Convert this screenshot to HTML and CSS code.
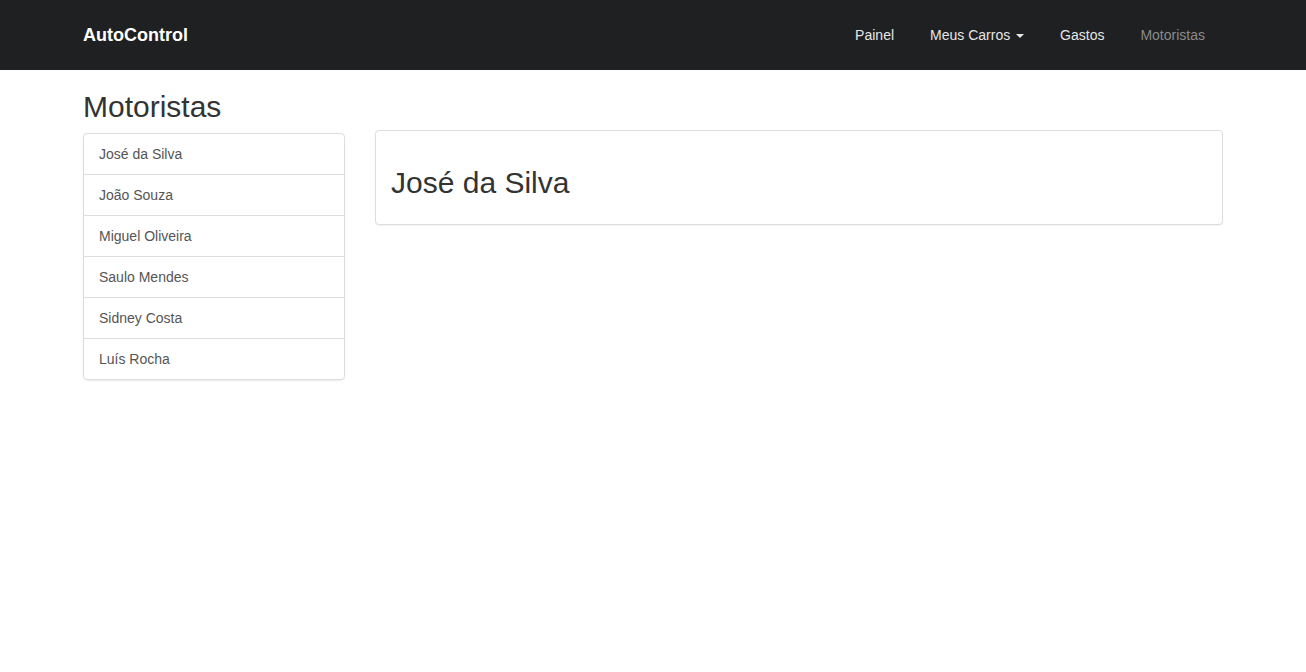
FILE: index.html
```html
<!DOCTYPE html>
<html lang="pt">
<head>
<meta charset="utf-8">
<title>AutoControl</title>
<link rel="stylesheet" href="styles.css">
</head>
<body>
<nav class="navbar">
  <div class="container navbar-inner">
    <a class="brand" href="#">AutoControl</a>
    <ul class="nav">
      <li><a href="#">Painel</a></li>
      <li><a href="#">Meus Carros <span class="caret"></span></a></li>
      <li><a href="#">Gastos</a></li>
      <li><a href="#" class="active">Motoristas</a></li>
    </ul>
  </div>
</nav>
<div class="container">
  <div class="row">
    <div class="col-side">
      <h2 class="page-title">Motoristas</h2>
      <div class="list-group">
        <a href="#" class="list-group-item">José da Silva</a>
        <a href="#" class="list-group-item">João Souza</a>
        <a href="#" class="list-group-item">Miguel Oliveira</a>
        <a href="#" class="list-group-item">Saulo Mendes</a>
        <a href="#" class="list-group-item">Sidney Costa</a>
        <a href="#" class="list-group-item">Luís Rocha</a>
      </div>
    </div>
    <div class="col-main">
      <div class="panel">
        <div class="panel-body">
          <h2 class="panel-title">José da Silva</h2>
        </div>
      </div>
    </div>
  </div>
</div>
</body>
</html>
```
FILE: styles.css
```css
* { box-sizing: border-box; }
html, body { margin: 0; padding: 0; }
body {
  font-family: "Liberation Sans", Arial, Helvetica, sans-serif;
  font-size: 14px;
  line-height: 1.428571;
  color: #333;
  background: #fff;
}
a { text-decoration: none; }

.container {
  width: 1170px;
  margin: 0 auto;
  padding: 0 15px;
}

.navbar {
  background: #1f2022;
  height: 70px;
}
.navbar-inner {
  display: flex;
  align-items: center;
  justify-content: space-between;
  height: 70px;
}
.brand {
  color: #fff;
  font-weight: bold;
  font-size: 18px;
  line-height: 20px;
  margin-top: -1px;
}
.nav {
  list-style: none;
  margin: 0;
  padding: 0;
  display: flex;
}
.nav a {
  display: block;
  padding: 0 18px;
  line-height: 20px;
  color: #e6e6e6;
  font-size: 14px;
}
.nav a.active { color: #8a8b8c; }
.caret {
  display: inline-block;
  width: 0;
  height: 0;
  margin-left: 2px;
  vertical-align: middle;
  border-top: 4px solid;
  border-right: 4px solid transparent;
  border-left: 4px solid transparent;
}

.row {
  display: flex;
  margin: 0 -15px;
}
.col-side {
  width: 292px;
  flex: none;
  padding: 0 15px;
}
.col-main {
  flex: 1;
  padding: 0 15px;
}

.page-title {
  font-size: 30px;
  font-weight: 500;
  line-height: 1.1;
  margin: 20px 0 10px;
}

.list-group {
  margin-bottom: 20px;
  box-shadow: 0 1px 2px rgba(0,0,0,.075);
  border-radius: 4px;
}
.list-group-item {
  display: block;
  padding: 10px 15px;
  margin-bottom: -1px;
  border: 1px solid #ddd;
  background: #fff;
  color: #555;
  line-height: 20px;
}
.list-group-item:first-child {
  border-top-left-radius: 4px;
  border-top-right-radius: 4px;
}
.list-group-item:last-child {
  margin-bottom: 0;
  border-bottom-left-radius: 4px;
  border-bottom-right-radius: 4px;
}

.panel {
  margin-top: 60px;
  margin-bottom: 20px;
  background: #fff;
  border: 1px solid #ddd;
  border-radius: 4px;
  box-shadow: 0 1px 1px rgba(0,0,0,.05);
}
.panel-body { padding: 15px; }
.panel-title {
  font-size: 30px;
  font-weight: 500;
  line-height: 1.1;
  margin: 20px 0 10px;
}
```
